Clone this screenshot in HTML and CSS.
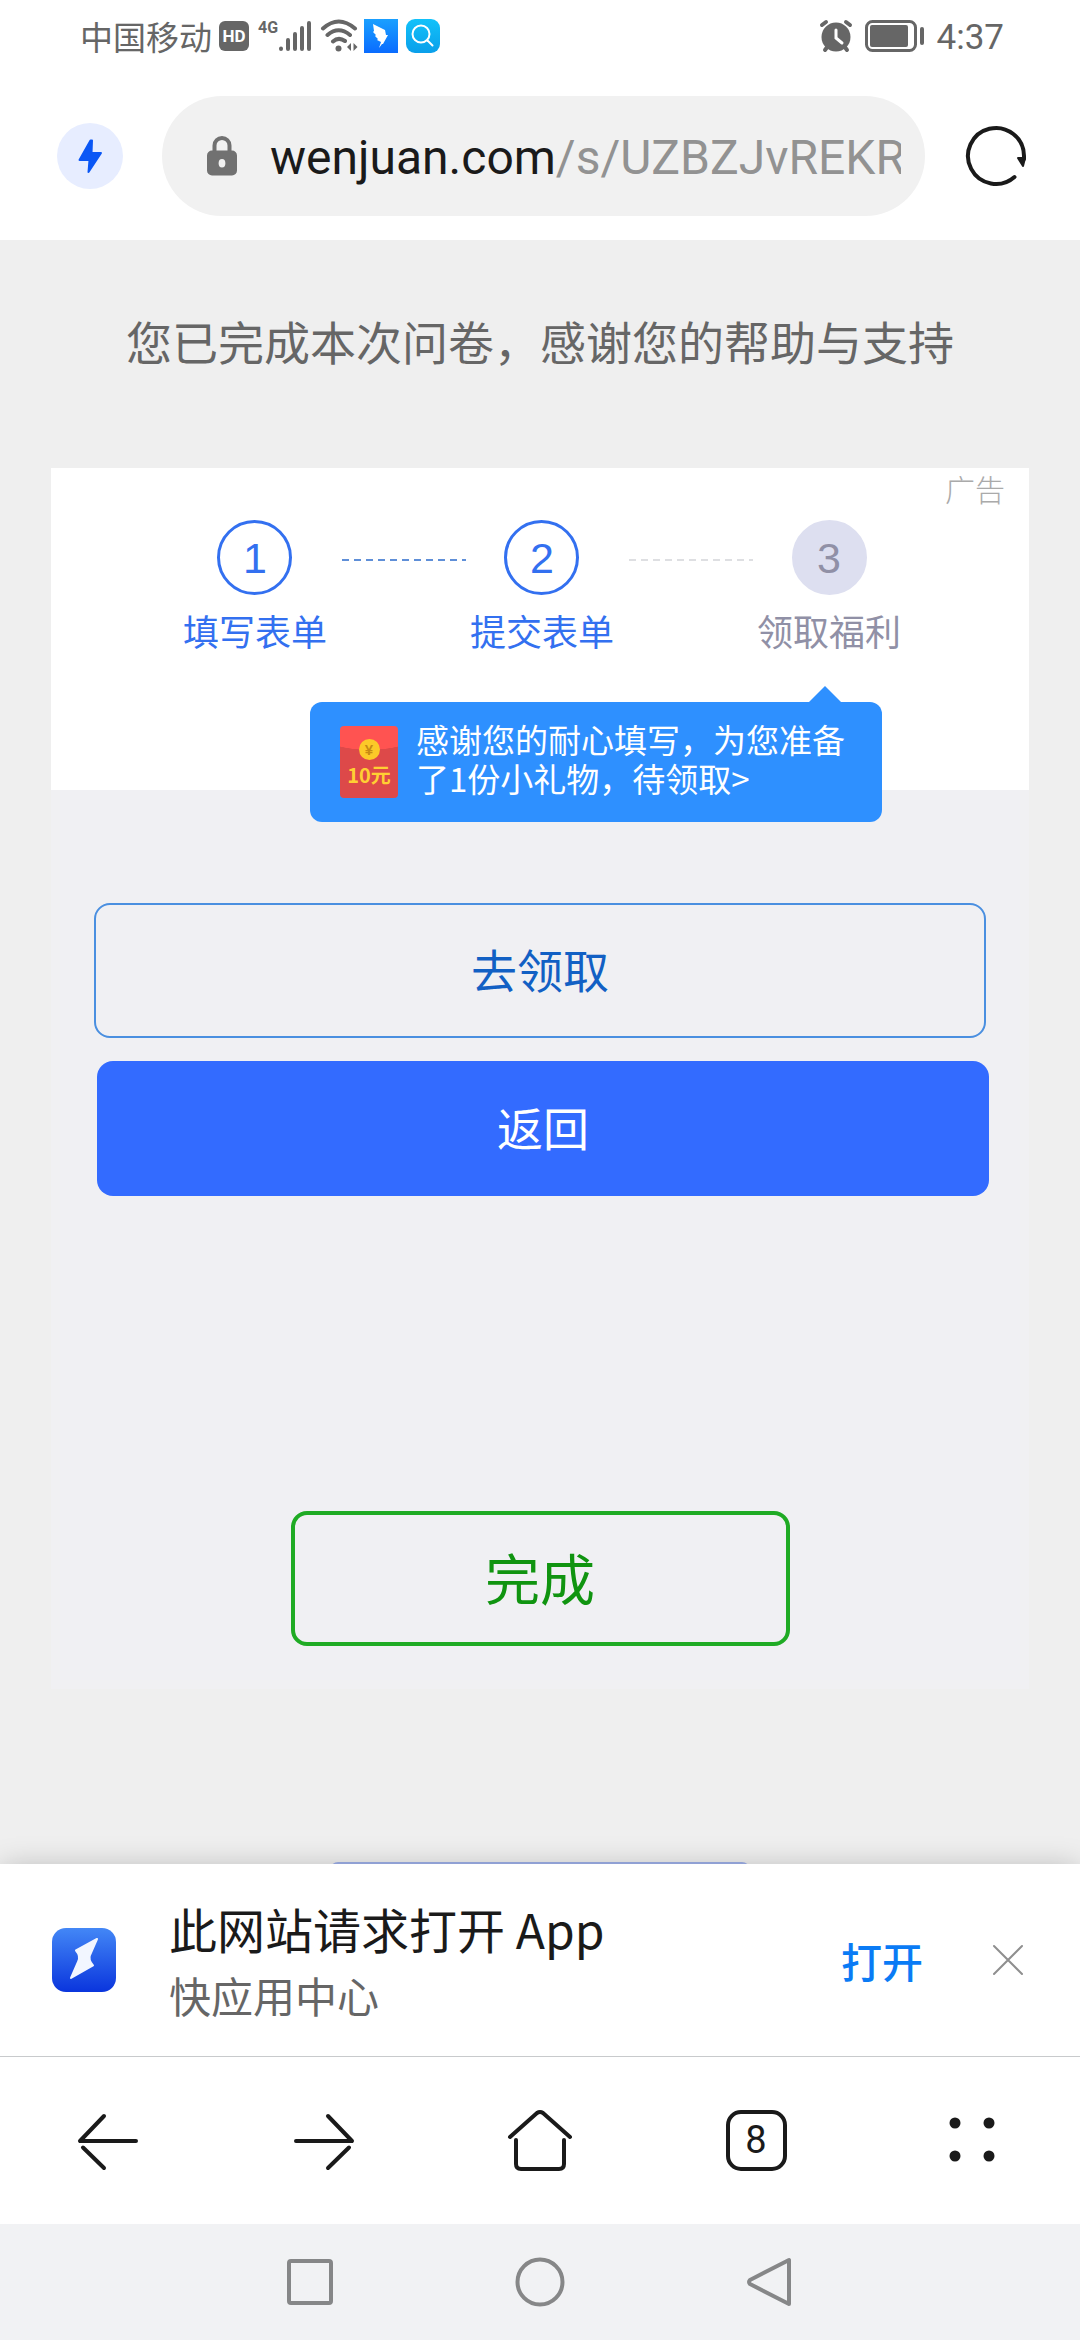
FILE: index.html
```html
<!DOCTYPE html>
<html lang="zh-CN">
<head>
<meta charset="utf-8">
<meta name="viewport" content="width=device-width, initial-scale=1">
<title>问卷完成</title>
<link rel="stylesheet" href="styles.css">
</head>
<body>
<header class="status">
  <span class="carrier">中国移动</span>
  <span class="hd">HD</span>
  <span class="net">4G</span>
  <svg class="signal" width="34" height="32" viewBox="0 0 34 32" fill="none" stroke="#666" stroke-width="4" stroke-linecap="round"><path d="M3 28.500V29M10 20V29M17 14V29M24 8V29M31 3V29"/></svg>
  <svg class="wifi" width="40" height="34" viewBox="0 0 40 34"><g fill="none" stroke="#666" stroke-width="4" stroke-linecap="round"><path d="M3 9.500Q18.500-4.500 35 9.500M7.500 16Q18.500 6.500 30 16M13 22.500Q18.500 17.500 25 22"/></g><circle cx="18.500" cy="29.500" r="3" fill="#666"/><path d="M31 24v8l-4-4zM33.500 24v8l4-4z" fill="#666"/></svg>
  <svg class="app" width="34" height="34" viewBox="0 0 34 34"><defs><linearGradient id="wing" x2="0" y2="1"><stop stop-color="#1aa0ff"/><stop offset="1" stop-color="#0a6cff"/></linearGradient></defs><path fill="url(#wing)" d="M0 0h34v34H0z"/><path fill="#fff" d="M9 5l12 6 1 5h2l-5 9h-1l-3 4 2-6-4-2 1-1-3-3 1-1-3-3 1-1z"/></svg>
  <svg class="app" width="34" height="34" viewBox="0 0 34 34"><defs><linearGradient id="find" x2="0" y2="1"><stop stop-color="#12c2fa"/><stop offset="1" stop-color="#0a9fea"/></linearGradient></defs><rect width="34" height="34" rx="9" fill="url(#find)"/><g fill="none" stroke="#fff" stroke-width="2" stroke-linecap="round"><circle cx="15" cy="15" r="8.500"/><path d="M21.500 21.500l5 5"/></g></svg>
  <svg class="alarm" width="34" height="34" viewBox="0 0 34 34" fill="none" stroke="#666" stroke-linecap="round"><circle cx="17" cy="18" r="14.500" fill="#666" stroke="none"/><path stroke-width="4" d="M3 6l4-3M31 6l-4-3M6 31l3-4M28 31l-3-4"/><path stroke="#fff" stroke-width="3" d="M17 11v8l6 5"/></svg>
  <svg class="battery" width="60" height="32" viewBox="0 0 60 32"><rect x="1.500" y="1.500" width="49" height="29" rx="6" fill="none" stroke="#666" stroke-width="3"/><rect x="5" y="5" width="38" height="22" rx="2" fill="#666"/><rect x="55" y="7" width="4" height="18" rx="2" fill="#666"/></svg>
  <time class="clock">4:37</time>
</header>

<div class="address">
  <button class="quick" type="button" aria-label="快应用"><svg width="26" height="36" viewBox="0 0 26 36"><path d="M13.500 2.500L2.500 22h10l-1 12L24 15H14.500l.5-12.500z" fill="#0b57f5" stroke="#0b57f5" stroke-width="2" stroke-linejoin="round"/></svg></button>
  <button class="url" type="button">
    <svg class="lock" width="30" height="42" viewBox="0 0 30 42"><path d="M7.500 18V10.500a7.500 7.500 0 0 1 15 0V18" fill="none" stroke="#717171" stroke-width="4"/><path fill="#717171" fill-rule="evenodd" d="M5 15.500h20a5 5 0 0 1 5 5v15a5 5 0 0 1-5 5H5a5 5 0 0 1-5-5v-15a5 5 0 0 1 5-5zm10 8.500a3.200 4 0 0 0 0 8.500a3.200 4 0 0 0 0-8.500z"/></svg>
    <span class="url-text"><span class="host">wenjuan.com</span>/s/UZBZJvREKR</span>
  </button>
  <button class="reload" type="button" aria-label="刷新"><svg width="64" height="64" viewBox="0 0 64 64"><path d="M50.500 53A28 28 0 1 1 60 32v3" fill="none" stroke="#1a1a1a" stroke-width="4" stroke-linecap="round"/><path d="M54 34h7l-2 8z" fill="#1a1a1a" stroke="#1a1a1a" stroke-width="2" stroke-linejoin="round"/></svg></button>
</div>

<main class="page">
  <h1 class="thanks">您已完成本次问卷，感谢您的帮助与支持</h1>
  <section class="card">
    <div class="offer">
      <span class="ad">广告</span>
      <ol class="steps">
        <li class="step"><span class="num">1</span><span>填写表单</span></li>
        <li class="line" aria-hidden="true"></li>
        <li class="step"><span class="num">2</span><span>提交表单</span></li>
        <li class="line line-off" aria-hidden="true"></li>
        <li class="step step-off"><span class="num">3</span><span>领取福利</span></li>
      </ol>
      <a class="tip" href="#gift">
        <span class="packet"><span class="coin">¥</span><span>10元</span></span>
        <span class="tip-text">感谢您的耐心填写，为您准备<br>了1份小礼物，待领取&gt;</span>
      </a>
    </div>
    <div class="actions">
      <button class="btn claim" type="button" id="gift">去领取</button>
      <button class="btn back" type="button">返回</button>
      <button class="btn done" type="button">完成</button>
    </div>
  </section>
  <button class="more" type="button" aria-label="更多"></button>
</main>

<footer class="dock">
  <div class="prompt">
    <svg class="logo" width="64" height="64" viewBox="0 0 64 64"><defs><linearGradient id="lg" x2="0" y2="1"><stop stop-color="#4387f6"/><stop offset="1" stop-color="#0a35dd"/></linearGradient></defs><rect width="64" height="64" rx="14" fill="url(#lg)"/><path d="M45 11L24 22.500Q29 28 26 34L19 50 41 37.500Q36 32 38 27z" fill="#f2f6ff" stroke="#f2f6ff" stroke-width="2" stroke-linejoin="round"/></svg>
    <div class="prompt-text">
      <strong class="prompt-title">此网站请求打开 App</strong>
      <span class="prompt-sub">快应用中心</span>
    </div>
    <button class="open" type="button">打开</button>
    <button class="close" type="button" aria-label="关闭"><svg width="32" height="32" viewBox="0 0 32 32" fill="none" stroke="#8f8f8f" stroke-width="2" stroke-linecap="round"><path d="M2 2l28 28M30 2L2 30"/></svg></button>
  </div>
  <nav class="tools">
    <button type="button" aria-label="后退"><svg width="64" height="64" viewBox="0 0 64 64" fill="none" stroke="#1a1a1a" stroke-width="4" stroke-linecap="round" stroke-linejoin="round"><path d="M28 7L4 32h56M7 38.500L28 59"/></svg></button>
    <button type="button" aria-label="前进"><svg width="64" height="64" viewBox="0 0 64 64" fill="none" stroke="#1a1a1a" stroke-width="4" stroke-linecap="round" stroke-linejoin="round"><path d="M36 7L60 32H4M57 38.500L36 59"/></svg></button>
    <button type="button" aria-label="主页"><svg width="68" height="64" viewBox="0 0 68 64" fill="none" stroke="#1a1a1a" stroke-width="4" stroke-linecap="round" stroke-linejoin="round"><path d="M4 28L31 4q3-2 6 0L64 28M10 31V55q0 5 5 5H53q5 0 5-5V31"/></svg></button>
    <button type="button" aria-label="标签页"><span class="tabs">8</span></button>
    <button type="button" aria-label="菜单"><svg width="48" height="48" viewBox="0 0 48 48" fill="#1a1a1a"><circle cx="7" cy="6" r="5.500"/><circle cx="41" cy="6" r="5.500"/><circle cx="7" cy="39" r="5.500"/><circle cx="41" cy="39" r="5.500"/></svg></button>
  </nav>
  <nav class="system">
    <button type="button" aria-label="最近任务"><svg width="52" height="52" viewBox="0 0 52 52"><rect x="5" y="5" width="42" height="42" rx="2" fill="none" stroke="#868788" stroke-width="4"/></svg></button>
    <button type="button" aria-label="桌面"><svg width="52" height="52" viewBox="0 0 52 52"><circle cx="26" cy="26" r="22.500" fill="none" stroke="#868788" stroke-width="4"/></svg></button>
    <button type="button" aria-label="返回上级"><svg width="52" height="52" viewBox="0 0 52 52"><path d="M45 4V48L6 28q-2-2 0-4z" fill="none" stroke="#868788" stroke-width="4" stroke-linejoin="round"/></svg></button>
  </nav>
</footer>
</body>
</html>
```
FILE: styles.css
```css
* { box-sizing: border-box; }

body {
  margin: 0;
  height: 100vh;
  display: flex;
  flex-direction: column;
  background: #fff;
  color: #1a1a1a;
  font-family: "Noto Sans CJK SC", "Noto Sans", sans-serif;
}

button {
  margin: 0;
  padding: 0;
  border: 0;
  background: none;
  color: inherit;
  font: inherit;
}

svg { display: block; flex: none; }

/* Status bar */
.status {
  height: 72px;
  flex: none;
  display: flex;
  align-items: center;
  padding: 0 76px 0 80px;
  color: #666;
}
.carrier { font-size: 33px; line-height: 40px; }
.hd {
  width: 30px;
  margin-left: 7px;
  border-radius: 6px;
  background: #666;
  color: #fff;
  font: 700 17px/30px Roboto, sans-serif;
  text-align: center;
}
.net {
  align-self: flex-start;
  margin: 18px 0 0 9px;
  font: 700 16px/20px Roboto, sans-serif;
}
.wifi { margin-left: 8px; }
.app { margin-left: 4px; }
.app + .app { margin-left: 8px; }
.alarm { margin-left: auto; }
.battery { margin: 0 12px; }
.clock { padding-top: 4px; font: 400 35px/40px Roboto, sans-serif; }

/* Address bar */
.address {
  height: 168px;
  flex: none;
  display: flex;
  align-items: center;
  padding: 0 52px 0 57px;
}
.quick {
  width: 66px;
  height: 66px;
  display: grid;
  place-items: center;
  border-radius: 50%;
  background: #e7edff;
}
.url {
  flex: 1;
  min-width: 0;
  height: 120px;
  margin: 0 39px;
  padding: 0 24px 0 45px;
  display: flex;
  align-items: center;
  gap: 33px;
  border-radius: 60px;
  background: #f1f1f1;
}
.url-text {
  flex: 1;
  min-width: 0;
  padding-top: 3px;
  overflow: hidden;
  white-space: nowrap;
  text-align: left;
  color: #929292;
  font: 400 48px/60px Roboto, sans-serif;
}
.host { color: #1a1a1a; }

/* Page */
.page {
  flex: 1;
  min-height: 0;
  overflow: hidden;
  padding: 65px 51px 0;
  background: #efefef;
}
.thanks {
  margin: 0 0 93px;
  color: #666;
  font-size: 46px;
  line-height: 70px;
  font-weight: 400;
  text-align: center;
  white-space: nowrap;
}
.card { background: #f0f0f3; }
.offer {
  display: flex;
  flex-direction: column;
  background: #fff;
}
.ad {
  margin-bottom: 12px;
  padding-right: 24px;
  color: #aaa;
  font-size: 30px;
  line-height: 40px;
  font-weight: 300;
  text-align: right;
}
.steps {
  margin: 0 0 50px;
  padding: 0 0 0 4px;
  display: flex;
  justify-content: center;
  list-style: none;
}
.step {
  display: flex;
  flex-direction: column;
  align-items: center;
  gap: 13px;
  color: #3370f0;
  font-size: 36px;
  line-height: 44px;
}
.num {
  width: 75px;
  height: 75px;
  border: 3px solid #3370f0;
  border-radius: 50%;
  font: 400 43px/71px "Liberation Sans", sans-serif;
  text-align: center;
}
.step-off { color: #9090a6; }
.step-off .num { border-color: #dddff0; background: #dddff0; }
.line {
  width: 124px;
  height: 2px;
  margin: 39px 4px 0 15px;
  background: repeating-linear-gradient(90deg, #5f8fd8 0 7px, transparent 7px 12px);
}
.line-off { background: repeating-linear-gradient(90deg, #dedfe2 0 7px, transparent 7px 12px); }
.tip {
  position: relative;
  align-self: flex-end;
  width: 572px;
  height: 120px;
  margin: 0 147px -32px 0;
  padding: 0 30px;
  display: flex;
  gap: 18px;
  align-items: center;
  border-radius: 12px;
  background: #2e90ff;
  color: #fff;
  font-size: 33px;
  line-height: 39px;
  text-decoration: none;
  white-space: nowrap;
}
.tip::before {
  content: "";
  position: absolute;
  right: 41px;
  bottom: 100%;
  border: 16px solid transparent;
  border-top-width: 0;
  border-bottom-color: #2e90ff;
}
.tip-text { padding-bottom: 6px; }
.packet {
  width: 58px;
  height: 72px;
  padding-top: 13px;
  display: flex;
  flex-direction: column;
  align-items: center;
  border-radius: 4px;
  background: radial-gradient(ellipse 58px 24px at 50% 0, #ff5351 98%, #dd4949);
  color: #ffcf33;
  font-size: 20px;
  line-height: 30px;
  font-weight: 700;
}
.coin {
  width: 21px;
  height: 21px;
  border-radius: 50%;
  background: #fcc928;
  color: #c78a14;
  font: 700 15px/21px "Liberation Sans", sans-serif;
  text-align: center;
}
.actions {
  display: flex;
  flex-direction: column;
  align-items: center;
  padding: 113px 40px 43px;
}
.btn {
  width: 892px;
  max-width: 100%;
  height: 135px;
  padding-bottom: 5px;
  border-radius: 16px;
  font-size: 46px;
}
.claim { border: 2px solid #4a8fe0; color: #1260c4; }
.back {
  align-self: flex-end;
  margin: 23px 0 315px;
  background: #336bff;
  color: #fff;
}
.done {
  width: 499px;
  border: 4px solid #1fab24;
  color: #109410;
  font-size: 55px;
}
.more {
  display: block;
  width: 420px;
  height: 90px;
  margin: 173px auto 0;
  border-radius: 8px;
  background: #9fb1ea;
}

/* Bottom dock */
.dock {
  flex: none;
  position: relative;
  background: #fff;
  box-shadow: 0 2px 28px -2px rgba(0, 0, 0, .25);
}
.prompt {
  height: 193px;
  display: flex;
  align-items: center;
  padding: 0 56px 0 52px;
  border-bottom: 1px solid #c8cacc;
}
.prompt-text {
  flex: 1;
  margin-left: 53px;
  display: flex;
  flex-direction: column;
  white-space: nowrap;
}
.prompt-title { font-size: 48px; line-height: 70px; font-weight: 400; }
.prompt-sub { color: #666; font-size: 42px; line-height: 64px; }
.open { color: #0a7bf5; font-size: 41px; font-weight: 500; }
.close { margin-left: 69px; }
.tools {
  height: 167px;
  display: grid;
  grid-template-columns: repeat(5, 1fr);
}
.tools button, .system button { display: grid; place-items: center; }
.tabs {
  width: 61px;
  height: 61px;
  border: 4px solid #1a1a1a;
  border-radius: 15px;
  font: 400 38px/53px Roboto, sans-serif;
}
.system {
  height: 116px;
  display: grid;
  grid-template-columns: repeat(3, 230px);
  justify-content: center;
  background: #f1f2f4;
}
```
